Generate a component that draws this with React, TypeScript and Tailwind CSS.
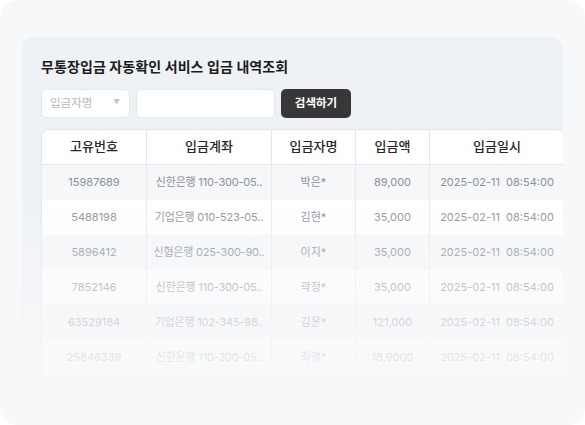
import React from 'react';

// 입금 내역 (하단으로 갈수록 흐려지는 미리보기 테이블)
const rows = [
  { id: '15987689', account: '신한은행 110-300-05..', name: '박은*', amount: '89,000', date: '2025-02-11  08:54:00' },
  { id: '5488198', account: '기업은행 010-523-05..', name: '김현*', amount: '35,000', date: '2025-02-11  08:54:00' },
  { id: '5896412', account: '신협은행 025-300-90..', name: '이지*', amount: '35,000', date: '2025-02-11  08:54:00' },
  { id: '7852146', account: '신한은행 110-300-05..', name: '곽정*', amount: '35,000', date: '2025-02-11  08:54:00' },
  { id: '63529184', account: '기업은행 102-345-98..', name: '김윤*', amount: '121,000', date: '2025-02-11  08:54:00' },
  { id: '25846339', account: '신한은행 110-300-05..', name: '최영*', amount: '18,9000', date: '2025-02-11  08:54:00' },
  { id: '', account: '', name: '', amount: '', date: '' },
];

const headers = ['고유번호', '입금계좌', '입금자명', '입금액', '입금일시'];

export default function App() {
  return (
    <div className="w-[585px] h-[425px] bg-white font-['Inter','Noto_Sans_CJK_KR',sans-serif]">
      <div className="relative w-full h-full rounded-[18px] bg-[#f7f8fa] pt-[37px] px-[22px] overflow-hidden">
        {/* 패널 */}
        <div className="h-[346px] rounded-[12px] bg-[#eff2f5] pl-[19px] pt-[20px] overflow-hidden">
          <h1 className="text-[14px] leading-[20px] font-bold text-[#1b1b1b] tracking-[0.1px]">
            무통장입금 자동확인 서비스 입금 내역조회
          </h1>

          {/* 검색 */}
          <div className="flex gap-[6px] mt-[12px] h-[29px]">
            <div className="w-[89px] flex items-center justify-between rounded-[5px] border border-[#e4e7eb] bg-white pl-[8px] pr-[9px]">
              <span className="text-[11.5px] text-[#b4b9c0]">입금자명</span>
              <span className="text-[7px] text-[#c3c7cd]">▼</span>
            </div>
            <div className="w-[139px] rounded-[5px] border border-[#e4e7eb] bg-white" />
            <button className="w-[70px] rounded-[5px] bg-[#373737] text-white text-[11.5px] font-semibold">
              검색하기
            </button>
          </div>

          {/* 테이블 */}
          <div className="mt-[11px] w-[524px] shrink-0 rounded-t-[8px] border border-[#e3e7eb] bg-white overflow-hidden">
            <div className="grid grid-cols-[105px_125px_84px_74px_1fr] h-[35px] border-b border-[#e3e7eb]">
              {headers.map((h, i) => (
                <div
                  key={h}
                  className={`flex items-center justify-center text-[13px] font-medium text-[#262626] ${i < 4 ? 'border-r border-[#e3e7eb]' : ''}`}
                >
                  {h}
                </div>
              ))}
            </div>
            {rows.map((r, idx) => (
              <div
                key={idx}
                className={`grid grid-cols-[105px_125px_84px_74px_1fr] h-[35px] text-[11px] text-[#8a919b] ${idx % 2 === 0 ? 'bg-[#f5f7f9]' : 'bg-white'}`}
              >
                <div className="flex items-center justify-center border-r border-[#e8ebee]">{r.id}</div>
                <div className="flex items-center justify-center border-r border-[#e8ebee] tracking-[-0.2px]">{r.account}</div>
                <div className="flex items-center justify-center border-r border-[#e8ebee]">{r.name}</div>
                <div className="flex items-center justify-center border-r border-[#e8ebee]">{r.amount}</div>
                <div className="flex items-center justify-center whitespace-pre">{r.date}</div>
              </div>
            ))}
          </div>
        </div>

        {/* 하단 페이드 */}
        <div className="absolute left-0 right-0 top-[200px] h-[190px] bg-gradient-to-b from-[#f7f8fa]/0 via-[#f7f8fa]/55 to-[#f7f8fa]/95 pointer-events-none" />
      </div>
    </div>
  );
}
